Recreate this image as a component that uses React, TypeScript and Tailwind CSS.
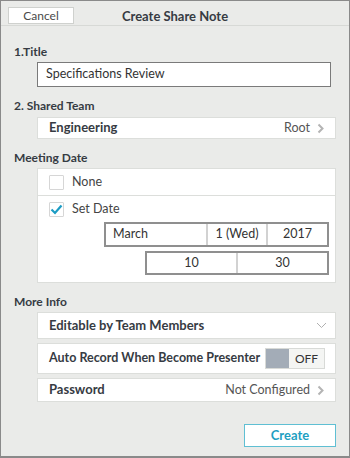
import React from "react";

function Chevron() {
  return (
    <svg width="7" height="11" viewBox="0 0 7 11" className="ml-[7px]">
      <path d="M1.5 1.5 L5.5 5.5 L1.5 9.5" fill="none" stroke="#b4b4b4" strokeWidth="2" />
    </svg>
  );
}

function Label({ children, className = "" }: { children: React.ReactNode; className?: string }) {
  return <div className={`pl-[13px] h-[16px] leading-[16px] text-[12px] font-bold text-[#363b43] ${className}`}>{children}</div>;
}

function Check({ checked }: { checked?: boolean }) {
  return (
    <div className="w-[15px] h-[15px] border border-[#d6d6d6] bg-white rounded-[1px] flex items-center justify-center">
      {checked && (
        <svg width="13" height="11" viewBox="0 0 13 11">
          <path d="M1.5 5.5 L5 9 L11.5 1.5" fill="none" stroke="#1b9cc4" strokeWidth="2.2" />
        </svg>
      )}
    </div>
  );
}

export default function App() {
  return (
    <div className="w-[350px] h-[458px] border border-[#8a8a8a] border-b-2 bg-[#eaebe9] flex flex-col font-['Lato','Noto_Sans',sans-serif] text-[#333]">
      {/* header */}
      <div className="h-[25px] border-b border-[#d7d9d6] grid grid-cols-[1fr_auto_1fr] items-start">
        <div className="pl-[7px] pt-[6px] flex">
          <button className="block w-[66px] h-[17px] border border-[#cfd1ce] bg-white text-[12px] leading-[15px] text-[#4a4a4a]">Cancel</button>
        </div>
        <div className="pt-[6px] text-[13px] leading-[18px] font-bold text-[#363b43] whitespace-nowrap">Create Share Note</div>
        <div />
      </div>

      <Label className="mt-[18px]">1.Title</Label>
      <div className="mt-[2px] ml-[36px] mr-[18px] h-[25px] border border-[#7a7a7a] bg-white flex items-center pl-[8px] text-[12.5px]">
        Specifications Review
      </div>

      <Label className="mt-[11px]">2. Shared Team</Label>
      <div className="mt-[3px] ml-[36px] mr-[13px] h-[22px] border border-[#dcdedb] bg-white flex items-center pl-[11px] pr-[11px] text-[12.5px] whitespace-nowrap">
        <span className="font-bold text-[#363b43] text-[13px]">Engineering</span>
        <span className="ml-auto text-[#555]">Root</span>
        <Chevron />
      </div>

      <Label className="mt-[11px]">Meeting Date</Label>
      <div className="mt-[2px] ml-[36px] mr-[13px] h-[115px] border border-[#dcdedb] bg-white flex flex-col text-[12.5px]">
        <div className="h-[27px] border-b border-[#dcdedb] flex items-center pl-[11px] gap-[8px]">
          <Check />
          <span className="text-[#444]">None</span>
        </div>
        <div className="h-[26px] flex items-center pl-[11px] gap-[8px]">
          <Check checked />
          <span className="text-[#444]">Set Date</span>
        </div>
        <div className="ml-[66px] mr-[6px] h-[25px] border-2 border-[#8f8f8f] grid grid-cols-[100px_60px_1fr] text-[#333]">
          <div className="flex items-center pl-[7px]">March</div>
          <div className="border-l-2 border-[#d2d2d2] flex items-center justify-center">1 (Wed)</div>
          <div className="border-l-2 border-[#d2d2d2] flex items-center justify-center">2017</div>
        </div>
        <div className="mt-[4px] ml-[107px] mr-[6px] h-[24px] border-2 border-[#8f8f8f] grid grid-cols-[89px_1fr] text-[#333]">
          <div className="flex items-center justify-center">10</div>
          <div className="border-l-2 border-[#d2d2d2] flex items-center justify-center">30</div>
        </div>
      </div>

      <Label className="mt-[11px]">More Info</Label>
      <div className="mt-[2px] ml-[36px] mr-[13px] h-[27px] border border-[#dcdedb] bg-white flex items-center pl-[11px] pr-[8px] text-[13px] whitespace-nowrap">
        <span className="font-bold text-[#363b43]">Editable by Team Members</span>
        <svg width="11" height="7" viewBox="0 0 11 7" className="ml-auto">
          <path d="M1 1 L5.5 5.5 L10 1" fill="none" stroke="#b0b0b0" strokeWidth="1" />
        </svg>
      </div>
      <div className="mt-[4px] ml-[36px] mr-[13px] h-[31px] border border-[#dcdedb] bg-white flex items-center pl-[11px] pr-[10px] text-[12.5px] whitespace-nowrap">
        <span className="font-bold text-[#363b43]">Auto Record When Become Presenter</span>
        <div className="ml-auto h-[21px] w-[60px] flex border border-[#d8dad7]">
          <div className="w-[23px] bg-[#a3acb7]" />
          <div className="flex-1 bg-[#f4f5f3] flex items-center justify-center text-[12px] text-[#333]">OFF</div>
        </div>
      </div>
      <div className="mt-[4px] ml-[36px] mr-[13px] h-[24px] border border-[#dcdedb] bg-white flex items-center pl-[11px] pr-[11px] text-[12.5px] whitespace-nowrap">
        <span className="font-bold text-[#363b43] text-[13px]">Password</span>
        <span className="ml-auto text-[#555]">Not Configured</span>
        <Chevron />
      </div>

      <div className="mt-[22px] mr-[13px] flex justify-end">
        <button className="block w-[92px] h-[23px] border border-[#5fbfd3] bg-white text-[13px] font-bold text-[#1f9fc2]">Create</button>
      </div>
    </div>
  );
}
